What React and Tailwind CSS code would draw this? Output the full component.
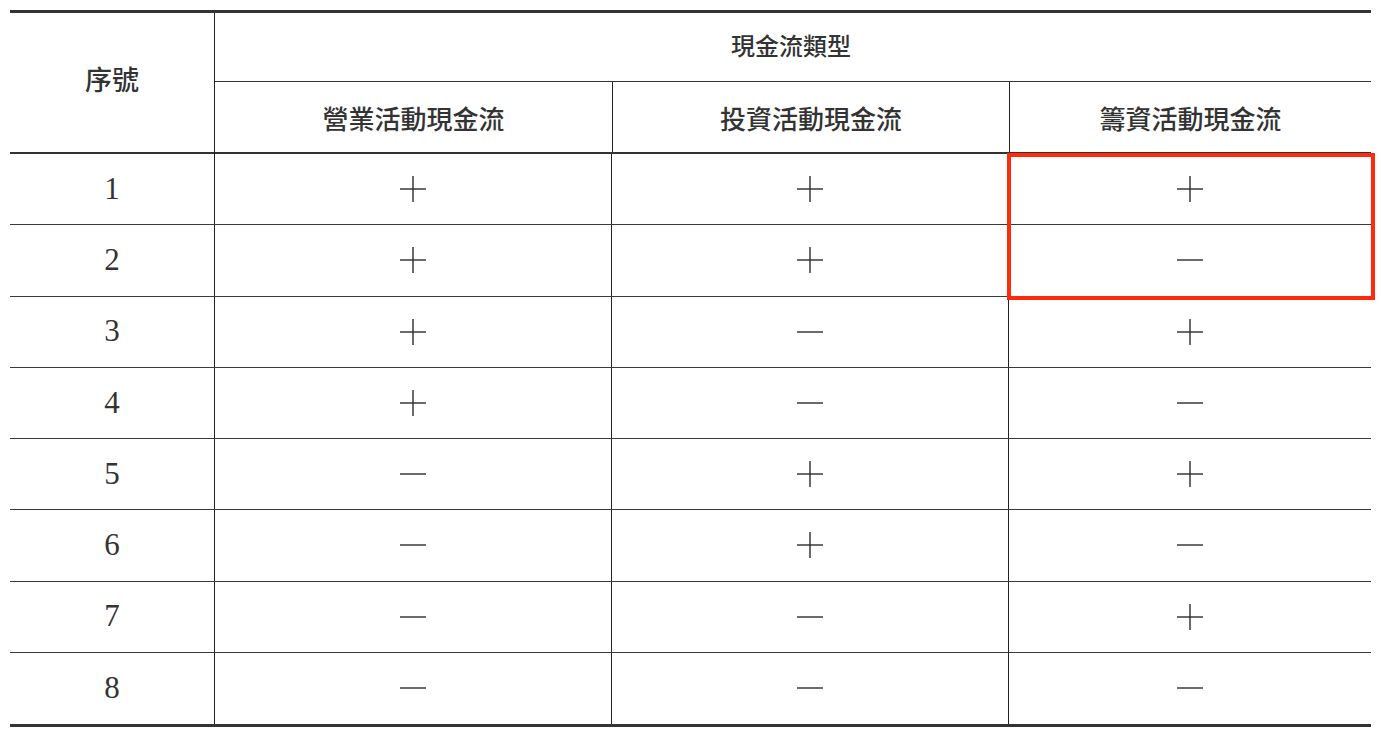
import React from 'react';

const rows = [
  ['+', '+', '+'],
  ['+', '+', '-'],
  ['+', '-', '+'],
  ['+', '-', '-'],
  ['-', '+', '+'],
  ['-', '+', '-'],
  ['-', '-', '+'],
  ['-', '-', '-'],
];

const cjk = { fontFamily: '"Noto Sans CJK TC", "Noto Sans CJK SC", sans-serif' };
const serif = { fontFamily: '"Liberation Serif", "DejaVu Serif", serif' };

const Sign = ({ type }) => (
  <svg width="28" height="28" viewBox="0 0 28 28" className="block">
    <line x1="1" y1="14" x2="27" y2="14" stroke="#2b2b2b" strokeWidth="1.4" />
    {type === '+' && <line x1="14" y1="1" x2="14" y2="27" stroke="#2b2b2b" strokeWidth="1.4" />}
  </svg>
);

export default function App() {
  return (
    <div className="min-h-screen bg-white pt-[10px] pl-[10px]">
      <div className="relative w-[1361px] border-t-[3px] border-b-[3px] border-[#333]">
        {/* header */}
        <div className="grid grid-cols-[204px_1157px]">
          <div className="flex h-[141px] items-center justify-center border-b-2 border-[#333] pb-[6px] text-[27px] font-medium text-[#333]" style={cjk}>
            序號
          </div>
          <div className="flex flex-col border-l-[1.5px] border-[#222]">
            <div className="flex h-[69px] items-center justify-center border-b border-[#333] pb-[4px] pr-[4px] text-[24px] font-medium text-[#333]" style={cjk}>
              現金流類型
            </div>
            <div className="grid h-[72px] grid-cols-[397px_397px_1fr] border-b-2 border-[#333]">
              <div className="flex items-center justify-center text-[26px] font-medium text-[#333]" style={cjk}>營業活動現金流</div>
              <div className="flex items-center justify-center border-l-[1.5px] border-[#222] text-[26px] font-medium text-[#333]" style={cjk}>投資活動現金流</div>
              <div className="flex items-center justify-center border-l-[1.5px] border-[#222] text-[26px] font-medium text-[#333]" style={cjk}>籌資活動現金流</div>
            </div>
          </div>
        </div>
        {/* body */}
        {rows.map((r, i) => (
          <div
            key={i}
            className={`grid h-[71.25px] grid-cols-[204px_397px_397px_1fr] ${i < rows.length - 1 ? 'border-b-[1.5px] border-[#3a3a3a]' : ''}`}
          >
            <div className="flex items-center justify-center text-[31px] text-[#333]" style={serif}>{i + 1}</div>
            {r.map((s, j) => (
              <div key={j} className="flex items-center justify-center border-l-[1.5px] border-[#222]">
                <Sign type={s} />
              </div>
            ))}
          </div>
        ))}
        {/* highlight */}
        <div className="pointer-events-none absolute left-[997px] top-[140px] h-[147px] w-[368px] border-4 border-[#ff2a0c]" />
      </div>
    </div>
  );
}
